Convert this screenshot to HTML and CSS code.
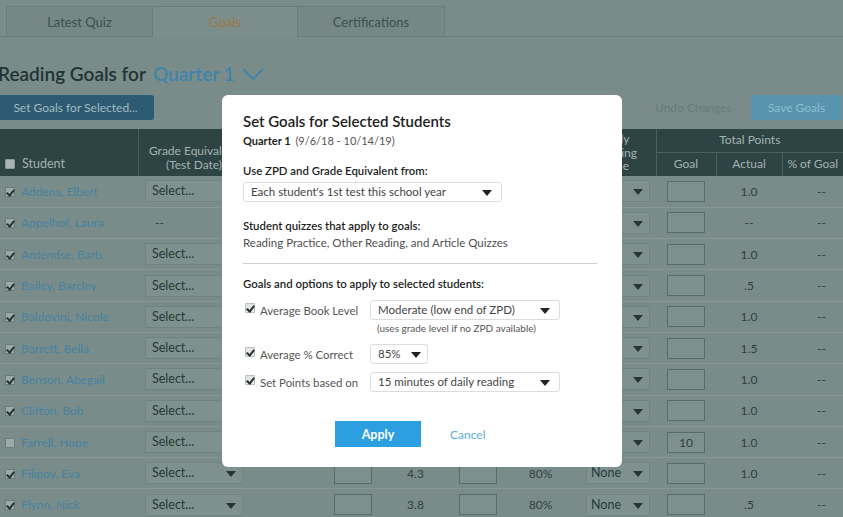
FILE: index.html
```html
<!DOCTYPE html>
<html lang="en">
<head>
<meta charset="utf-8">
<title>Reading Goals</title>
<link rel="stylesheet" href="styles.css">
</head>
<body>
<div class="page">
  <nav class="tabs">
    <div class="tab">Latest Quiz</div>
    <div class="tab active">Goals</div>
    <div class="tab">Certifications</div>
  </nav>

  <h1 class="title">Reading Goals for <span class="quarter">Quarter 1 <svg class="chev" width="22" height="13" viewBox="0 0 22 13"><path d="M1 1 L11 11 L21 1" fill="none" stroke="currentColor" stroke-width="2"/></svg></span></h1>

  <div class="toolbar">
    <button class="btn-dark">Set Goals for Selected...</button>
    <span class="undo">Undo Changes</span>
    <button class="btn-save">Save Goals</button>
  </div>

  <table class="grid">
    <colgroup>
      <col class="w-student"><col class="w-ge"><col class="w-zpd"><col class="w-g"><col class="w-a"><col class="w-g"><col class="w-a"><col class="w-drt"><col class="w-tg"><col class="w-ta"><col class="w-tp">
    </colgroup>
    <thead>
      <tr class="h1row">
        <th rowspan="2" class="h-student"><span class="cb hcb"></span>Student</th>
        <th rowspan="2" class="h-ge">Grade Equivalent<br>(Test Date)</th>
        <th rowspan="2"></th>
        <th colspan="2"></th>
        <th colspan="2"></th>
        <th rowspan="2" class="h-drt">Daily<br>Reading<br>Time</th>
        <th colspan="3">Total Points</th>
      </tr>
      <tr class="h2row">
        <th></th><th></th><th></th><th></th><th>Goal</th><th>Actual</th><th>% of Goal</th>
      </tr>
    </thead>
    <tbody>
      <tr><td class="stu"><span class="cb on"></span><a>Addens, Elbert</a></td><td><div class="dd ge">Select...<i class="caret"></i></div></td><td></td><td><span class="box"></span></td><td class="num"></td><td><span class="box"></span></td><td class="num"></td><td><div class="dd drt">None<i class="caret"></i></div></td><td><span class="box"></span></td><td class="num">1.0</td><td class="pct">--</td></tr>
      <tr><td class="stu"><span class="cb on"></span><a>Appelhof, Laura</a></td><td><div class="ge plain">--</div></td><td></td><td><span class="box"></span></td><td class="num"></td><td><span class="box"></span></td><td class="num"></td><td><div class="dd drt">None<i class="caret"></i></div></td><td><span class="box"></span></td><td class="num">--</td><td class="pct">--</td></tr>
      <tr><td class="stu"><span class="cb on"></span><a>Ardendse, Barb</a></td><td><div class="dd ge">Select...<i class="caret"></i></div></td><td></td><td><span class="box"></span></td><td class="num"></td><td><span class="box"></span></td><td class="num"></td><td><div class="dd drt">None<i class="caret"></i></div></td><td><span class="box"></span></td><td class="num">1.0</td><td class="pct">--</td></tr>
      <tr><td class="stu"><span class="cb on"></span><a>Bailey, Barcley</a></td><td><div class="dd ge">Select...<i class="caret"></i></div></td><td></td><td><span class="box"></span></td><td class="num"></td><td><span class="box"></span></td><td class="num"></td><td><div class="dd drt">None<i class="caret"></i></div></td><td><span class="box"></span></td><td class="num">.5</td><td class="pct">--</td></tr>
      <tr><td class="stu"><span class="cb on"></span><a>Baldovini, Nicole</a></td><td><div class="dd ge">Select...<i class="caret"></i></div></td><td></td><td><span class="box"></span></td><td class="num"></td><td><span class="box"></span></td><td class="num"></td><td><div class="dd drt">None<i class="caret"></i></div></td><td><span class="box"></span></td><td class="num">1.0</td><td class="pct">--</td></tr>
      <tr><td class="stu"><span class="cb on"></span><a>Barrett, Bella</a></td><td><div class="dd ge">Select...<i class="caret"></i></div></td><td></td><td><span class="box"></span></td><td class="num"></td><td><span class="box"></span></td><td class="num"></td><td><div class="dd drt">None<i class="caret"></i></div></td><td><span class="box"></span></td><td class="num">1.5</td><td class="pct">--</td></tr>
      <tr><td class="stu"><span class="cb on"></span><a>Benson, Abegail</a></td><td><div class="dd ge">Select...<i class="caret"></i></div></td><td></td><td><span class="box"></span></td><td class="num"></td><td><span class="box"></span></td><td class="num"></td><td><div class="dd drt">None<i class="caret"></i></div></td><td><span class="box"></span></td><td class="num">1.0</td><td class="pct">--</td></tr>
      <tr><td class="stu"><span class="cb on"></span><a>Clifton, Bob</a></td><td><div class="dd ge">Select...<i class="caret"></i></div></td><td></td><td><span class="box"></span></td><td class="num"></td><td><span class="box"></span></td><td class="num"></td><td><div class="dd drt">None<i class="caret"></i></div></td><td><span class="box"></span></td><td class="num">1.0</td><td class="pct">--</td></tr>
      <tr><td class="stu"><span class="cb"></span><a>Farrell, Hope</a></td><td><div class="dd ge">Select...<i class="caret"></i></div></td><td></td><td><span class="box"></span></td><td class="num"></td><td><span class="box"></span></td><td class="num"></td><td><div class="dd drt">None<i class="caret"></i></div></td><td><span class="box val">10</span></td><td class="num">1.0</td><td class="pct">--</td></tr>
      <tr><td class="stu"><span class="cb on"></span><a>Filipov, Eva</a></td><td><div class="dd ge">Select...<i class="caret"></i></div></td><td></td><td><span class="box"></span></td><td class="num">4.3</td><td><span class="box"></span></td><td class="num">80%</td><td><div class="dd drt">None<i class="caret"></i></div></td><td><span class="box"></span></td><td class="num">1.0</td><td class="pct">--</td></tr>
      <tr><td class="stu"><span class="cb on"></span><a>Flynn, Nick</a></td><td><div class="dd ge">Select...<i class="caret"></i></div></td><td></td><td><span class="box"></span></td><td class="num">3.8</td><td><span class="box"></span></td><td class="num">80%</td><td><div class="dd drt">None<i class="caret"></i></div></td><td><span class="box"></span></td><td class="num">.5</td><td class="pct">--</td></tr>
    </tbody>
  </table>
</div>

<div class="modal" role="dialog">
  <h2 class="m-title">Set Goals for Selected Students</h2>
  <p class="m-sub"><b>Quarter 1</b> <span>(9/6/18 - 10/14/19)</span></p>

  <p class="m-label first">Use ZPD and Grade Equivalent from:</p>
  <div class="msel wide">Each student's 1st test this school year<i class="caret"></i></div>

  <p class="m-label quiz">Student quizzes that apply to goals:</p>
  <p class="m-text">Reading Practice, Other Reading, and Article Quizzes</p>

  <hr class="m-rule">

  <p class="m-label goals">Goals and options to apply to selected students:</p>

  <div class="opt o1">
    <span class="cb mcb on"></span><span class="opt-label">Average Book Level</span>
    <div class="msel mid">Moderate (low end of ZPD)<i class="caret"></i></div>
  </div>
  <div class="hint">(uses grade level if no ZPD available)</div>
  <div class="opt o2">
    <span class="cb mcb on"></span><span class="opt-label">Average % Correct</span>
    <div class="msel small">85%<i class="caret"></i></div>
  </div>
  <div class="opt o3">
    <span class="cb mcb on"></span><span class="opt-label">Set Points based on</span>
    <div class="msel mid">15 minutes of daily reading<i class="caret"></i></div>
  </div>

  <div class="m-actions">
    <button class="apply">Apply</button>
    <a class="cancel">Cancel</a>
  </div>
</div>
</body>
</html>
```

FILE: styles.css
```css
* { box-sizing: border-box; }

html, body {
  margin: 0;
  padding: 0;
}

body {
  width: 843px;
  height: 517px;
  overflow: hidden;
  position: relative;
  background: #7a8c89;
  font-family: Lato, "Open Sans", sans-serif;
  color: #2a3b3a;
}

/* Tabs */
.tabs {
  display: flex;
  height: 37px;
  padding: 6px 0 0 6px;
  border-bottom: 1px solid #6b7e7b;
}
.tab {
  width: 147px;
  display: flex;
  align-items: center;
  justify-content: center;
  font-size: 13px;
  color: #3c504f;
  background: #768885;
  border: 1px solid #6b7e7b;
  border-bottom: none;
}
.tab + .tab { border-left: none; }
.tab.active {
  width: 145px;
  background: #7c8e8b;
  color: #9c7646;
  margin-bottom: -1px;
}

/* Heading */
.title {
  margin: 25px 0 0 -2px;
  font-size: 19px;
  line-height: 24px;
  font-weight: 600;
  color: #1f3433;
  display: flex;
  align-items: center;
  white-space: nowrap;
}
.quarter {
  color: #3f85ab;
  margin-left: 7px;
  display: inline-flex;
  align-items: center;
  font-weight: 600;
}
.chev {
  margin-left: 7px;
  margin-top: 1px;
  color: #3f85ab;
}

/* Toolbar */
.toolbar {
  display: flex;
  align-items: center;
  margin-top: 9px;
  height: 25px;
}
.btn-dark {
  margin-left: -3px;
  width: 157px;
  height: 25px;
  border: none;
  border-radius: 3px;
  background: #2d5c72;
  color: #a3b9c1;
  font-family: inherit;
  font-size: 12px;
  padding: 0;
}
.undo {
  margin-left: auto;
  font-size: 12px;
  color: #667b79;
  margin-right: 19px;
}
.btn-save {
  width: 91px;
  height: 25px;
  margin-right: 1px;
  border: none;
  border-radius: 3px;
  background: #5795ae;
  color: #8dbdd2;
  font-family: inherit;
  font-size: 12px;
  padding: 0;
}

/* Table */
.grid {
  margin-top: 9px;
  border-collapse: collapse;
  table-layout: fixed;
  width: 843px;
  font-size: 12px;
}
.w-student { width: 138px; }
.w-ge { width: 112px; }
.w-zpd { width: 72px; }
.w-g { width: 62px; }
.w-a { width: 63px; }
.w-drt { width: 84px; }
.w-tg { width: 60px; }
.w-ta { width: 66px; }
.w-tp { width: 61px; }

.grid thead th {
  background: #2e4444;
  color: #a4b2b0;
  font-weight: 400;
  font-size: 12px;
  text-align: center;
  border-left: 1px solid #4a5f5e;
  padding: 0;
  line-height: 14px;
}
.grid thead th:first-child { border-left: none; }
.h1row th { height: 23px; }
.h2row th { height: 24px; border-top: 1px solid #4a5f5e; }
.grid thead th.h-student {
  text-align: left;
  vertical-align: bottom;
  padding: 0 0 5px 5px;
  font-size: 12.5px;
}
.grid thead th.h-ge {
  vertical-align: bottom;
  padding-bottom: 4px;
}
.grid thead th.h-drt {
  line-height: 13.5px;
  padding-left: 4px;
}

.grid tbody tr { height: 31.3px; }
.grid tbody td {
  border-bottom: 1px solid #869794;
  padding: 0;
  text-align: center;
  vertical-align: middle;
  color: #2e403f;
  font-size: 12px;
}
.grid tbody td.stu {
  text-align: left;
  padding-left: 5px;
  white-space: nowrap;
}
.stu a {
  color: #4583a3;
  font-size: 12px;
  margin-left: 6px;
}
.grid tbody td.pct {
  text-align: right;
  padding-right: 17px;
}

/* Checkboxes */
.cb {
  display: inline-block;
  width: 10px;
  height: 10px;
  border: 1px solid #6a7c7a;
  background: #9eaaa8;
  border-radius: 1px;
  vertical-align: -1px;
  position: relative;
}
.cb.on::after {
  content: "";
  position: absolute;
  left: 2px;
  top: 0px;
  width: 3px;
  height: 6px;
  border: solid #243332;
  border-width: 0 2px 2px 0;
  transform: rotate(40deg);
}
.hcb {
  background: #a9b3b2;
  border-color: #8a9796;
  margin-right: 7px;
  vertical-align: -1px;
}

/* Table controls */
.dd {
  position: relative;
  height: 22px;
  border: 1px solid #71837f;
  background: #7f918e;
  border-radius: 2px;
  text-align: left;
  line-height: 20px;
  padding-left: 6px;
  color: #263938;
  font-size: 12.5px;
}
.dd .caret {
  position: absolute;
  right: 6px;
  top: 8px;
}
.dd.ge { width: 98px; margin-left: 7px; }
.plain.ge { text-align: left; padding-left: 17px; }
.dd.drt { width: 64px; margin-left: 14px; padding-left: 4px; }

.box {
  display: inline-block;
  width: 38px;
  height: 21px;
  border: 1px solid #576b69;
  background: #7e908d;
  vertical-align: middle;
  line-height: 19px;
  text-align: center;
  color: #2e403f;
  font-size: 12px;
}

.caret {
  display: inline-block;
  width: 0;
  height: 0;
  border-left: 5px solid transparent;
  border-right: 5px solid transparent;
  border-top: 6px solid #273635;
}

/* Modal */
.modal {
  position: absolute;
  left: 222px;
  top: 95px;
  width: 400px;
  height: 372px;
  background: #fff;
  border-radius: 6px;
  padding: 16px 25px 0 21px;
  color: #222;
}
.m-title {
  margin: 0;
  font-size: 15px;
  line-height: 20px;
  font-weight: 600;
  color: #1e1e1e;
}
.m-sub {
  margin: 2px 0 0;
  font-size: 11px;
  line-height: 16px;
  color: #555;
}
.m-sub b { color: #1e1e1e; font-weight: 700; }
.m-sub span { margin-left: 2px; }
.m-label {
  margin: 0;
  font-size: 11.4px;
  line-height: 16px;
  font-weight: 600;
  color: #1e1e1e;
}
.m-label.first { margin-top: 14px; }
.m-label.quiz { margin-top: 16px; }
.m-label.goals { margin-top: 12px; }
.m-text {
  margin: 1px 0 0;
  font-size: 11.5px;
  line-height: 16px;
  color: #505050;
}
.m-rule {
  margin: 12px 0 0;
  border: none;
  border-top: 1px solid #cfcfcf;
  height: 0;
}

.msel {
  position: relative;
  height: 20px;
  border: 1px solid #dcdcdc;
  border-radius: 3px;
  background: #fff;
  font-size: 11.5px;
  line-height: 18px;
  color: #444;
  padding-left: 7px;
}
.msel .caret {
  position: absolute;
  right: 9px;
  top: 7px;
  border-top-color: #222;
}
.msel.wide { width: 259px; margin-top: 3px; }
.msel.mid { width: 190px; }
.msel.small { width: 58px; }
.msel.small .caret { right: 6px; }

.opt {
  display: flex;
  align-items: center;
  height: 20px;
  padding-left: 2px;
}
.opt.o1 { margin-top: 8px; }
.opt.o2 { margin-top: 9px; }
.opt.o3 { margin-top: 8px; }
.mcb {
  background: #e4e4e4;
  border-color: #bdbdbd;
  width: 10px;
  height: 10px;
  margin-top: -4px;
}
.opt-label {
  width: 110px;
  margin-left: 5px;
  font-size: 11.4px;
  color: #555;
}
.hint {
  margin: 2px 0 0 134px;
  font-size: 10px;
  line-height: 13px;
  color: #555;
}

.m-actions {
  display: flex;
  align-items: center;
  margin-top: 29px;
  padding-left: 92px;
}
.apply {
  width: 86px;
  height: 26px;
  border: none;
  background: #2c9fe0;
  color: #fff;
  font-family: inherit;
  font-weight: 700;
  font-size: 12.5px;
  padding: 0;
}
.cancel {
  margin-left: 29px;
  font-size: 12px;
  color: #5aaed6;
}
```
